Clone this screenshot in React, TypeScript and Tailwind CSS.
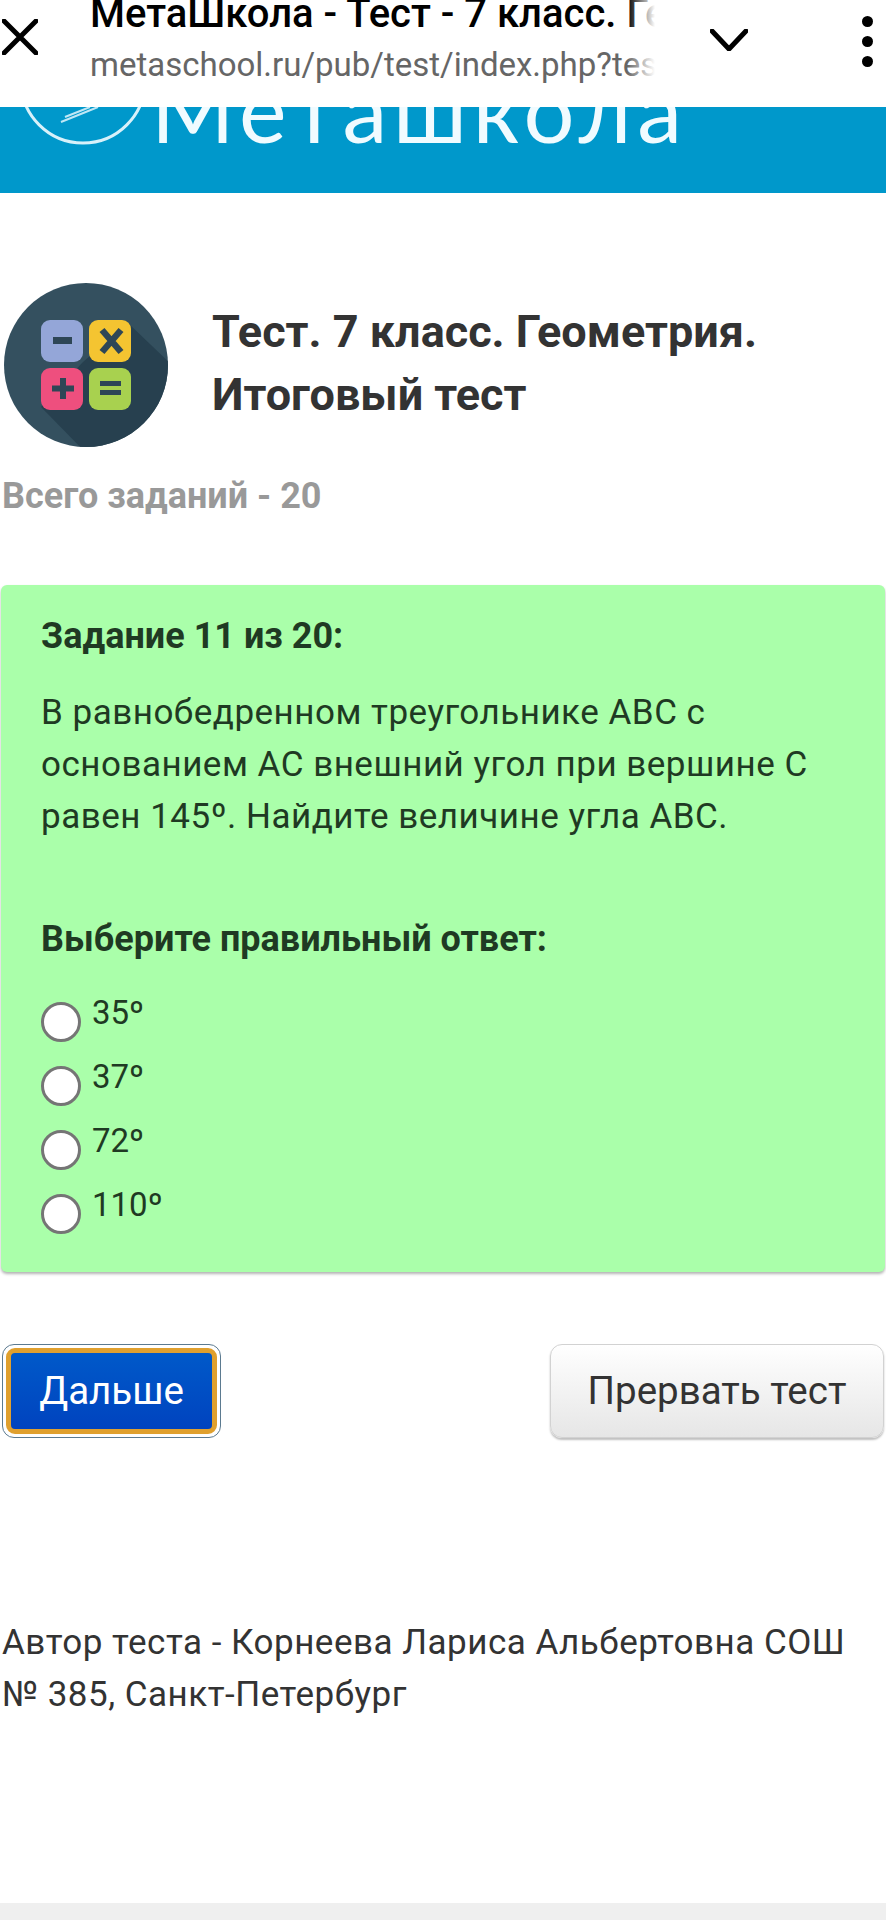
const answers = ['35º', '37º', '72º', '110º'];

const CalcIcon = () => (
  <svg viewBox="0 0 164 164" className="h-[164px] w-[164px] shrink-0">
    <defs>
      <clipPath id="disc">
        <circle cx="82" cy="82" r="82" />
      </clipPath>
    </defs>
    <circle cx="82" cy="82" r="82" fill="#34505f" />
    <polygon points="124,40 172,86 172,172 84,172 37,124 79,79" fill="#27404f" clipPath="url(#disc)" />
    <rect x="37" y="37" width="42" height="42" rx="9" fill="#94a6d8" />
    <rect x="85" y="37" width="42" height="42" rx="9" fill="#f4c431" />
    <rect x="37" y="85" width="42" height="42" rx="9" fill="#ee4f7e" />
    <rect x="85" y="85" width="42" height="42" rx="9" fill="#a8d14f" />
    <rect x="49" y="54" width="19" height="7" fill="#2e4656" />
    <path d="M98 47 L117 69 M117 47 L98 69" stroke="#2e4656" strokeWidth="6.5" />
    <path d="M48 105.5 H70 M59 95 V116" stroke="#2e4656" strokeWidth="6" />
    <rect x="96" y="98" width="21" height="5" fill="#2e4656" />
    <rect x="96" y="107" width="21" height="5" fill="#2e4656" />
  </svg>
);

const App = () => {
  return (
    <div className="relative h-[1920px] w-[886px] overflow-hidden bg-white font-['Roboto',sans-serif] text-[35px] leading-[52px] tracking-[0.5px] text-[#333]">
      <header className="relative z-10 flex h-[107px] items-start overflow-hidden bg-white tracking-normal">
        <svg viewBox="0 0 36 36" className="ml-[2px] mt-[19px] h-[36px] w-[36px] shrink-0">
          <path d="M2 2 L34 34 M34 2 L2 34" stroke="#000" strokeWidth="5" strokeLinecap="round" />
        </svg>
        <div className="relative ml-[52px] w-[565px] shrink-0 overflow-hidden">
          <div className="-mt-[10px] whitespace-nowrap text-[40px] font-medium leading-[48px] text-black">
            МетаШкола - Тест - 7 класс. Геометрия. Итоговый тест
          </div>
          <div className="mt-[7px] whitespace-nowrap text-[33px] leading-[40px] text-[#666]">
            metaschool.ru/pub/test/index.php?test=1234
          </div>
          <div className="absolute inset-y-0 right-0 w-[28px] bg-gradient-to-r from-white/0 to-white" />
        </div>
        <svg viewBox="0 0 38 22" className="ml-[55px] mt-[29px] h-[22px] w-[38px] shrink-0">
          <path d="M2 2 L19 20 L36 2" fill="none" stroke="#000" strokeWidth="5" strokeLinecap="round" strokeLinejoin="round" />
        </svg>
        <div className="ml-[114px] mt-[16px] flex shrink-0 flex-col gap-[9px]">
          <span className="h-[11px] w-[11px] rounded-full bg-black" />
          <span className="h-[11px] w-[11px] rounded-full bg-black" />
          <span className="h-[11px] w-[11px] rounded-full bg-black" />
        </div>
      </header>

      <div className="flex h-[86px] overflow-hidden bg-[#0098cb] tracking-normal">
        <svg viewBox="0 0 130 60" className="ml-[18px] h-[60px] w-[130px] shrink-0">
          <circle cx="65" cy="-26" r="62" fill="none" stroke="#d8f1fa" strokeWidth="3" />
          <path d="M43 15 L80 0 M47 10 L72 0" fill="none" stroke="#bfe7f5" strokeWidth="2" />
        </svg>
        <div className="ml-[3px] -mt-[49px] whitespace-nowrap font-['Lato',sans-serif] text-[90px] font-normal leading-[100px] tracking-[5.8px] text-[#f0fbff]">
          Меташкола
        </div>
      </div>

      <main>
        <div className="ml-[4px] mt-[90px] flex items-center gap-[44px]">
          <CalcIcon />
          <h1 className="-mt-[4px] text-[45px] font-bold leading-[63px] tracking-normal">
            Тест. 7 класс. Геометрия.
            <br />
            Итоговый тест
          </h1>
        </div>
        <p className="ml-[2px] mt-[23px] text-[36px] font-bold tracking-normal text-[#999]">Всего заданий - 20</p>

        <section className="mx-[1px] mt-[63px] h-[687px] rounded-[6px] bg-[#aaffaa] px-[40px] pt-[25px] text-[#1f3a23] shadow-[0_2px_3px_rgba(0,0,0,0.3)]">
          <p className="text-[36px] font-bold tracking-normal">Задание 11 из 20:</p>
          <p className="mt-[25px]">
            В равнобедренном треугольнике АВС с
            <br />
            основанием АС внешний угол при вершине С
            <br />
            равен 145º. Найдите величине угла АВС.
          </p>
          <p className="mt-[70px] text-[36px] font-bold tracking-normal">Выберите правильный ответ:</p>
          <div className="mt-[25px] flex flex-col">
            {answers.map((a) => (
              <label key={a} className="flex h-[64px] items-start gap-[11px]">
                <span className="mt-[12px] h-[40px] w-[40px] shrink-0 rounded-full border-[3px] border-[#757575] bg-white" />
                <span className="mt-[-3px] text-[33px] tracking-normal">{a}</span>
              </label>
            ))}
          </div>
        </section>

        <div className="mt-[72px] flex items-start justify-between px-[2px]">
          <div className="h-[94px] w-[219px] rounded-[12px] border border-[#5b7a90] bg-white p-[3px]">
            <button className="flex h-full w-full items-center justify-center rounded-[9px] border-[5px] border-[#e0a02e] bg-gradient-to-b from-[#0059c9] to-[#0043bf] text-[38.5px] tracking-normal text-white">
              Дальше
            </button>
          </div>
          <button className="h-[94px] w-[334px] rounded-[12px] border border-[#d2d2d2] bg-gradient-to-b from-white to-[#e6e6e6] text-[38.5px] tracking-normal text-[#333] shadow-[0_2px_2px_rgba(0,0,0,0.25)]">
            Прервать тест
          </button>
        </div>

        <p className="ml-[2px] mt-[179px]">
          Автор теста - Корнеева Лариса Альбертовна СОШ
          <br />
          № 385, Санкт-Петербург
        </p>
      </main>

      <div className="absolute inset-x-0 bottom-0 h-[17px] bg-[#efefef]" />
    </div>
  );
};

export default App;
